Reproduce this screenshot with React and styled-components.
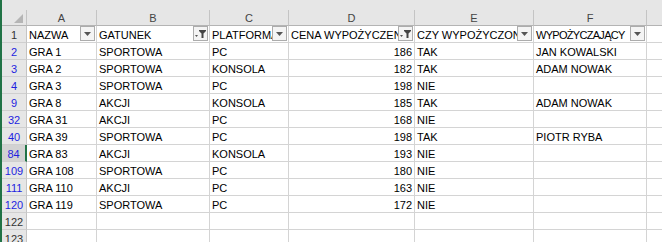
import React from "react"
import styled, { createGlobalStyle, css } from 'styled-components'

const Global = createGlobalStyle`
  body{
    margin:0;
    background:#fff;
    font-family:"Liberation Sans", Arial, sans-serif;
  }
`

const columns = [
  { key: 'a', letter: 'A', title: 'NAZWA' },
  { key: 'b', letter: 'B', title: 'GATUNEK', filtered: true },
  { key: 'c', letter: 'C', title: 'PLATFORMA' },
  { key: 'd', letter: 'D', title: 'CENA WYPOŻYCZENIA', filtered: true, numeric: true },
  { key: 'e', letter: 'E', title: 'CZY WYPOŻYCZONA' },
  { key: 'f', letter: 'F', title: 'WYPOŻYCZAJĄCY', tight: true },
]

const rows = [
  { n: 2, a: 'GRA 1', b: 'SPORTOWA', c: 'PC', d: 186, e: 'TAK', f: 'JAN KOWALSKI' },
  { n: 3, a: 'GRA 2', b: 'SPORTOWA', c: 'KONSOLA', d: 182, e: 'TAK', f: 'ADAM NOWAK' },
  { n: 4, a: 'GRA 3', b: 'SPORTOWA', c: 'PC', d: 198, e: 'NIE', f: '' },
  { n: 9, a: 'GRA 8', b: 'AKCJI', c: 'KONSOLA', d: 185, e: 'TAK', f: 'ADAM NOWAK' },
  { n: 32, a: 'GRA 31', b: 'AKCJI', c: 'PC', d: 168, e: 'NIE', f: '' },
  { n: 40, a: 'GRA 39', b: 'SPORTOWA', c: 'PC', d: 198, e: 'TAK', f: 'PIOTR RYBA' },
  { n: 84, a: 'GRA 83', b: 'AKCJI', c: 'KONSOLA', d: 193, e: 'NIE', f: '', active: true },
  { n: 109, a: 'GRA 108', b: 'SPORTOWA', c: 'PC', d: 180, e: 'NIE', f: '' },
  { n: 111, a: 'GRA 110', b: 'AKCJI', c: 'PC', d: 163, e: 'NIE', f: '' },
  { n: 120, a: 'GRA 119', b: 'SPORTOWA', c: 'PC', d: 172, e: 'NIE', f: '' },
]

function DropButton({ filtered }) {
  return (
    <FilterBtn>
      {filtered ? (
        <svg width="13" height="9" viewBox="0 0 13 9">
          <path d="M1 6h3l-1.5 2z" fill="#555" />
          <path d="M5 1h7v1l-2.5 2.5V9h-2V4.5L5 2z" fill="#444" />
        </svg>
      ) : (
        <svg width="7" height="4" viewBox="0 0 7 4">
          <path d="M0 0h7L3.5 4z" fill="#555" />
        </svg>
      )}
    </FilterBtn>
  )
}

function App() {
  return (
    <Sheet>
      <Global />
      <TopStrip />
      <Grid>
        <Corner><CornerMark /></Corner>
        {columns.map(c => <ColHead key={c.letter}>{c.letter}</ColHead>)}
        <ColHead $last />

        <RowHead>1</RowHead>
        {columns.map(c => (
          <Cell key={c.key} $tight={c.tight}>
            {c.title}
            <DropButton filtered={c.filtered} />
          </Cell>
        ))}
        <Cell $last />

        {rows.map(r => (
          <React.Fragment key={r.n}>
            <RowHead $filtered $active={r.active}>{r.n}</RowHead>
            {columns.map(c => (
              <Cell key={c.key} $numeric={c.numeric}>{r[c.key]}</Cell>
            ))}
            <Cell $last />
          </React.Fragment>
        ))}

        {[122, 123].map(n => (
          <React.Fragment key={n}>
            <RowHead>{n}</RowHead>
            {columns.map(c => <Cell key={c.key} />)}
            <Cell $last />
          </React.Fragment>
        ))}
      </Grid>
    </Sheet>
  )
}

const Sheet = styled.div`
  border-left:2px solid #217346;
  height:242px;
  overflow:hidden;
  box-sizing:border-box;
`
const TopStrip = styled.div`
  height:10px;
  background:#e6e6e6;
`
const Grid = styled.div`
  display:grid;
  grid-template-columns:25px 70px 113px 79px 126px 119px 113px 1fr;
  grid-template-rows:16px;
  grid-auto-rows:17px;
  font-size:11px;
`
const headBase = css`
  background:#e6e6e6;
  color:#444;
  border-right:1px solid #c4c4c4;
  border-bottom:1px solid #b4b4b4;
  box-sizing:border-box;
  display:flex;
  align-items:center;
  justify-content:center;
`
const Corner = styled.div`
  ${headBase};
  position:relative;
`
const CornerMark = styled.div`
  position:absolute;
  right:3px;
  bottom:2px;
  width:0;
  height:0;
  border-left:9px solid transparent;
  border-bottom:9px solid #b5b5b5;
`
const ColHead = styled.div`
  ${headBase};
  padding-top:1px;
  ${p => p.$last && 'border-right:none;'}
`
const RowHead = styled.div`
  ${headBase};
  border-bottom-color:#cfcfcf;
  padding-top:1px;
  color:${p => p.$filtered ? '#1f1fe0' : '#333'};
  ${p => p.$active && css`
    background:#d2d2d2;
    border-right:2px solid #217346;
  `}
`
const Cell = styled.div`
  position:relative;
  box-sizing:border-box;
  border-right:1px solid #d4d4d4;
  border-bottom:1px solid #d4d4d4;
  padding:2px 2px 0 2px;
  line-height:14px;
  white-space:nowrap;
  overflow:hidden;
  color:#000;
  text-align:${p => p.$numeric ? 'right' : 'left'};
  ${p => p.$tight && 'letter-spacing:-0.7px;'}
  ${p => p.$last && 'border-right:none;'}
`
const FilterBtn = styled.div`
  position:absolute;
  right:1px;
  top:0;
  width:15px;
  height:15px;
  box-sizing:border-box;
  border:1px solid #acacac;
  background:#f4f4f4;
  display:flex;
  align-items:center;
  justify-content:center;
  letter-spacing:0;
`

export default App
